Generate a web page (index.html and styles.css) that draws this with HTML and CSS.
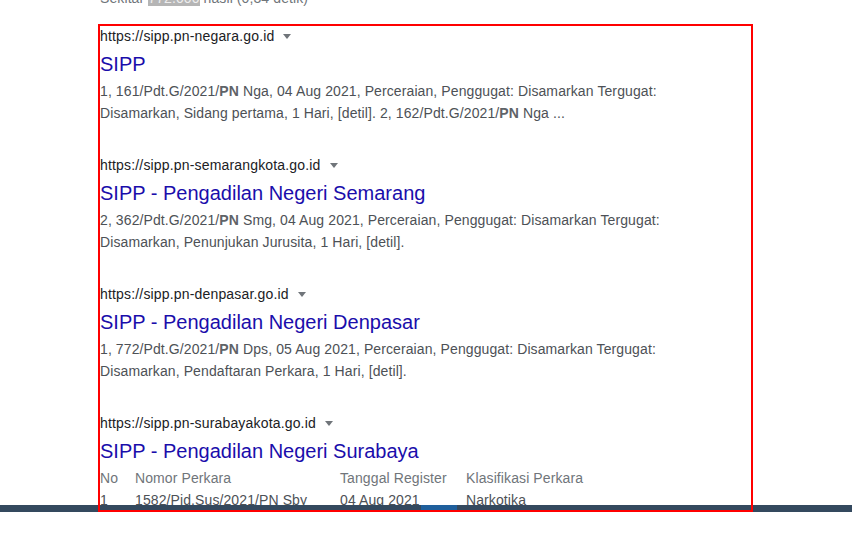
FILE: index.html
```html
<!DOCTYPE html>
<html lang="id">
<head>
<meta charset="utf-8">
<title>SIPP - hasil penelusuran</title>
<link rel="stylesheet" href="styles.css">
</head>
<body>
<div class="viewport">
  <main class="results">
    <div class="stats">Sekitar <span class="hl">772.000</span> hasil (0,34 detik)</div>

    <div class="result">
      <div class="cite">https://sipp.pn-negara.go.id <span class="arrow"></span></div>
      <a class="title" href="#">SIPP</a>
      <div class="snippet">1, 161/Pdt.G/2021/<b>PN</b> Nga, 04 Aug 2021, Perceraian, Penggugat: Disamarkan Tergugat:<br>Disamarkan, Sidang pertama, 1 Hari, [detil]. 2, 162/Pdt.G/2021/<b>PN</b> Nga ...</div>
    </div>

    <div class="result">
      <div class="cite">https://sipp.pn-semarangkota.go.id <span class="arrow"></span></div>
      <a class="title" href="#">SIPP - Pengadilan Negeri Semarang</a>
      <div class="snippet">2, 362/Pdt.G/2021/<b>PN</b> Smg, 04 Aug 2021, Perceraian, Penggugat: Disamarkan Tergugat:<br>Disamarkan, Penunjukan Jurusita, 1 Hari, [detil].</div>
    </div>

    <div class="result">
      <div class="cite">https://sipp.pn-denpasar.go.id <span class="arrow"></span></div>
      <a class="title" href="#">SIPP - Pengadilan Negeri Denpasar</a>
      <div class="snippet">1, 772/Pdt.G/2021/<b>PN</b> Dps, 05 Aug 2021, Perceraian, Penggugat: Disamarkan Tergugat:<br>Disamarkan, Pendaftaran Perkara, 1 Hari, [detil].</div>
    </div>

    <div class="result">
      <div class="cite">https://sipp.pn-surabayakota.go.id <span class="arrow"></span></div>
      <a class="title" href="#">SIPP - Pengadilan Negeri Surabaya</a>
      <div class="table">
        <div class="th">No</div><div class="th">Nomor Perkara</div><div class="th">Tanggal Register</div><div class="th">Klasifikasi Perkara</div>
        <div class="td">1</div><div class="td">1582/Pid.Sus/2021/PN Sby</div><div class="td">04 Aug 2021</div><div class="td">Narkotika</div>
        <div class="td">2</div><div class="td">1583/Pid.Sus/2021/PN Sby</div><div class="td">04 Aug 2021</div><div class="td">Narkotika</div>
      </div>
    </div>
  </main>
  <div class="scrollbar"><span class="thumb"></span></div>
</div>
<div class="mark"></div>
</body>
</html>
```
FILE: styles.css
```css
html, body {
  margin: 0;
  padding: 0;
  background: #fff;
}
body {
  font-family: "Liberation Sans", Arial, sans-serif;
  font-size: 14px;
  color: #202124;
}
.viewport {
  position: relative;
  height: 512px;
  overflow: hidden;
}
.results {
  display: flex;
  flex-direction: column;
  padding-left: 100px;
  margin-top: -13px;
}
.stats {
  line-height: 22px;
  color: #70757a;
  letter-spacing: 0.1px;
  margin-bottom: 16px;
}
.hl {
  background: #b5b5b5;
  color: #eeeeee;
}
.result {
  display: flex;
  flex-direction: column;
  align-items: flex-start;
  margin-bottom: 30px;
}
.cite {
  line-height: 22px;
  color: #202124;
  letter-spacing: 0.17px;
  display: flex;
  align-items: center;
}
.arrow {
  display: inline-block;
  width: 0;
  height: 0;
  margin-left: 9px;
  margin-top: 1px;
  border-left: 4px solid transparent;
  border-right: 4px solid transparent;
  border-top: 5px solid #70757a;
}
.title {
  margin-top: 4px;
  font-size: 20px;
  line-height: 26px;
  color: #1a0dab;
  text-decoration: none;
}
.snippet {
  margin-top: 3px;
  line-height: 22px;
  color: #4d5156;
  letter-spacing: 0.1px;
}
.snippet b {
  color: #5f6368;
}
.table {
  margin-top: 3px;
  display: grid;
  grid-template-columns: 35px 205px 126px auto;
  line-height: 22px;
  letter-spacing: 0.1px;
}
.th {
  color: #70757a;
}
.td {
  color: #4d5156;
}
.scrollbar {
  position: absolute;
  left: 0;
  right: 0;
  bottom: 0;
  height: 7px;
  background: #34495e;
}
.thumb {
  position: absolute;
  left: 421px;
  top: 0;
  width: 36px;
  height: 7px;
  background: #1f5f9c;
}
.mark {
  position: absolute;
  left: 98px;
  top: 24px;
  width: 651px;
  height: 484px;
  border: 2px solid #ff0000;
}
```
